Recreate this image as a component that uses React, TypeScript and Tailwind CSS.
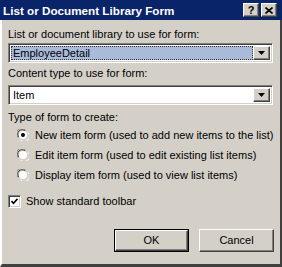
import React from "react";

const raised =
  "border border-t-white border-l-white border-b-[#404040] border-r-[#404040] shadow-[inset_-1px_-1px_0_#808080] bg-[#d4d0c8]";
const sunken =
  "border border-t-[#808080] border-l-[#808080] border-b-white border-r-white shadow-[inset_1px_1px_0_#404040,inset_-1px_-1px_0_#d4d0c8]";

function DropArrow() {
  return (
    <div className={`flex h-full w-[17px] items-center justify-center ${raised}`}>
      <svg width="7" height="4" viewBox="0 0 7 4">
        <path d="M0 0h7L3.5 4z" fill="#000" />
      </svg>
    </div>
  );
}

function Radio({ checked, label }: { checked?: boolean; label: string }) {
  return (
    <div className="flex h-[20px] items-center whitespace-nowrap">
      <svg width="12" height="12" viewBox="0 0 12 12" className="ml-[9px] shrink-0">
        <path d="M1 8.5A5 5 0 0 1 8.5 1" stroke="#808080" fill="none" />
        <path d="M2 8A4 4 0 0 1 8 2" stroke="#404040" fill="none" />
        <circle cx="6" cy="6" r="4" fill="#fff" />
        <path d="M3.5 11A5 5 0 0 0 11 3.5" stroke="#fff" fill="none" />
        {checked && <circle cx="6" cy="6" r="2" fill="#000" />}
      </svg>
      <span className="ml-[6px]">{label}</span>
    </div>
  );
}

export default function App() {
  return (
    <div
      className="flex h-[267px] w-[282px] flex-col bg-[#d4d0c8] text-[11px] leading-[13px] text-black"
      style={{ fontFamily: '"Liberation Sans", Arial, sans-serif' }}
    >
      <div className="flex h-[20px] shrink-0 items-center bg-[#0a246a] pl-[3px] pr-[5px]">
        <span className="text-[11.7px] font-bold text-white">List or Document Library Form</span>
        <div className="ml-auto flex gap-[2px]">
          <div className={`flex h-[14px] w-[16px] items-center justify-center text-[11px] font-bold ${raised}`}>
            ?
          </div>
          <div className={`flex h-[14px] w-[16px] items-center justify-center ${raised}`}>
            <svg width="8" height="7" viewBox="0 0 8 7">
              <path d="M0.5 0.5l7 6M7.5 0.5l-7 6" stroke="#000" strokeWidth="1.6" />
            </svg>
          </div>
        </div>
      </div>

      <div className="flex flex-1 flex-col border-b-[3px] border-l-[2px] border-r-[2px] border-b-[#404040] border-l-white border-r-[#404040] pl-[6px]">
        <div className="mt-[8px]">List or document library to use for form:</div>
        <div className={`mt-[2px] flex h-[20px] w-[265px] items-stretch bg-white p-[2px] ${sunken}`}>
          <div className="flex flex-1 items-center border border-dotted border-[#333] bg-[#a9bbd9] pl-[1px]">
            EmployeeDetail
          </div>
          <DropArrow />
        </div>

        <div className="mt-[4px]">Content type to use for form:</div>
        <div className={`mt-[5px] flex h-[20px] w-[265px] items-stretch bg-white p-[2px] ${sunken}`}>
          <div className="flex flex-1 items-center pl-[2px]">Item</div>
          <DropArrow />
        </div>

        <div className="mt-[6px]">Type of form to create:</div>
        <div className="mt-[1px] flex flex-col">
          <Radio checked label="New item form (used to add new items to the list)" />
          <Radio label="Edit item form (used to edit existing list items)" />
          <Radio label="Display item form (used to view list items)" />
        </div>

        <div className="mt-[6px] flex h-[20px] items-center">
          <div className={`flex h-[13px] w-[13px] items-center justify-center bg-white ${sunken}`}>
            <svg width="7" height="7" viewBox="0 0 7 7">
              <path d="M0.5 3l2 2.3L6.5 0.8" stroke="#000" strokeWidth="1.6" fill="none" />
            </svg>
          </div>
          <span className="ml-[5px]">Show standard toolbar</span>
        </div>

        <div className="mt-[18px] flex gap-[10px] pl-[106px]">
          <div className="h-[23px] w-[75px] border border-black">
            <div className={`flex h-full w-full items-center justify-center ${raised}`}>OK</div>
          </div>
          <div className={`flex h-[23px] w-[75px] items-center justify-center ${raised}`}>Cancel</div>
        </div>
      </div>
    </div>
  );
}
